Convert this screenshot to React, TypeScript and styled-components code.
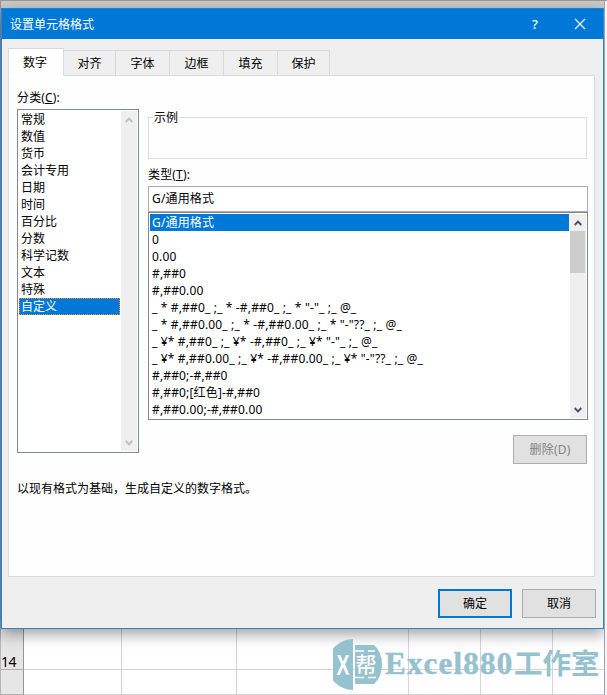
import React from "react";
import styled, { createGlobalStyle } from "styled-components";

const Global = createGlobalStyle`
  * { box-sizing: border-box; }
  html, body { margin: 0; padding: 0; overflow: hidden; }
  body { font: 12px/17px "Noto Sans", "Noto Sans CJK SC", sans-serif; color: #000; }
`;

const Sheet = styled.div`
  position: relative;
  display: flex;
  flex-direction: column;
  width: 607px;
  height: 695px;
  padding-top: 8px;
  overflow: hidden;
  background: linear-gradient(#989898 0 1px, #cbcbcb 1px 8px, #fff 8px);
`;

const Edge = styled.div<{ $right?: boolean }>`
  position: absolute;
  z-index: ${(p) => (p.$right ? 2 : 0)};
  top: 1px;
  bottom: 0;
  left: ${(p) => (p.$right ? "604px" : "0")};
  width: ${(p) => (p.$right ? "3px" : "1px")};
  background: ${(p) =>
    p.$right
      ? "linear-gradient(90deg, #a0a0a0 0 1px, #f5f5f7 1px)"
      : "linear-gradient(#9a9a9a 0 10px, #8b8d93 30px 615px, #b4b5b9 640px)"};
`;

const Dialog = styled.div`
  position: relative;
  z-index: 1;
  display: flex;
  flex-direction: column;
  flex: none;
  width: 603px;
  height: 621px;
  margin-left: 1px;
  border: 1px solid #2a86d2;
  border-top-color: #1580d8;
  background: #efefef;
  box-shadow: 0 5px 14px 0 rgba(0, 0, 0, 0.38);
`;

const TitleBar = styled.div`
  display: flex;
  align-items: center;
  height: 30px;
  flex: none;
  padding: 0 17px 0 8px;
  background: #0078d7;
  color: #fff;
`;

const Title = styled.div`
  flex: 1;
`;

const TitleIcon = styled.div`
  display: flex;
  justify-content: center;
  width: 12px;
  margin-left: 33px;
  font-size: 13px;
  font-weight: 500;
`;

const Tabs = styled.div`
  display: flex;
  align-items: flex-end;
  height: 37px;
  flex: none;
  padding-left: 6px;
  position: relative;
  z-index: 1;
  margin-bottom: -1px;
`;

const Tab = styled.div<{ $w: number; $active?: boolean }>`
  width: ${(p) => p.$w}px;
  height: ${(p) => (p.$active ? 28 : 26)}px;
  padding-top: ${(p) => (p.$active ? 5 : 4)}px;
  padding-right: ${(p) => (p.$active ? 2 : 0)}px;
  text-align: center;
  border: 1px solid #d9d9d9;
  border-left-width: ${(p) => (p.$active ? 1 : 0)}px;
  border-bottom-color: ${(p) => (p.$active ? "#fefefe" : "#d9d9d9")};
  background: ${(p) => (p.$active ? "#fefefe" : "#efefef")};
`;

const Panel = styled.div`
  display: flex;
  flex-direction: column;
  flex: none;
  width: 587px;
  height: 502px;
  margin-left: 6px;
  padding: 13px 6px 0 8px;
  border: 1px solid #d9d9d9;
  background: #fefefe;
`;

const Columns = styled.div`
  display: grid;
  grid-template-columns: 122px 440px;
  column-gap: 9px;
`;

const Column = styled.div<{ $top?: number }>`
  display: flex;
  flex-direction: column;
  padding-top: ${(p) => p.$top ?? 0}px;
`;

const Label = styled.div<{ $h: number; $top?: number }>`
  height: ${(p) => p.$h}px;
  padding-top: ${(p) => p.$top ?? 0}px;
  letter-spacing: 0.15px;
`;

const ListBox = styled.div<{ $h: number }>`
  display: flex;
  height: ${(p) => p.$h}px;
  padding: 1px;
  border: 1px solid #828790;
  background: #fff;
`;

const Items = styled.div<{ $w: number }>`
  width: ${(p) => p.$w}px;
  margin-right: 1px;
`;

const Item = styled.div<{ $selected?: boolean; $focus?: boolean; $spacing?: number }>`
  height: 17px;
  line-height: 17px;
  padding-left: 2px;
  white-space: pre;
  letter-spacing: ${(p) => p.$spacing ?? 0}px;
  color: ${(p) => (p.$selected ? "#fff" : "#000")};
  background: ${(p) => (p.$selected ? "#0078d7" : "transparent")};
  outline: ${(p) => (p.$focus ? "1px dotted #ff8728" : "none")};
  outline-offset: -1px;
`;

const ScrollTrack = styled.div`
  display: flex;
  flex-direction: column;
  align-items: center;
  width: 16px;
  background: #efefef;
`;

const ArrowSlot = styled.div`
  display: flex;
  align-items: center;
  justify-content: center;
  width: 16px;
  height: 17px;
`;

const Thumb = styled.div`
  width: 15px;
  height: 42px;
  align-self: flex-start;
  background: #cdcdcd;
`;

const Spacer = styled.div`
  flex: 1;
`;

const Sample = styled.fieldset`
  width: 439px;
  height: 50px;
  margin: 0;
  padding: 0;
  border: 1px solid #dcdcdc;
`;

const Legend = styled.legend`
  height: 17px;
  margin-left: 4px;
  padding: 0 1px;
`;

const TypeInput = styled.div`
  height: 26px;
  padding: 3px 3px 0;
  border: 1px solid #ababb0;
  background: #fff;
  letter-spacing: 0.15px;
`;

const Button = styled.div<{ $kind?: "primary" | "disabled" }>`
  display: flex;
  align-items: center;
  justify-content: center;
  width: 74px;
  height: 29px;
  background: #e1e1e1;
  border: ${(p) => (p.$kind === "primary" ? "2px solid #0078d7" : "1px solid #adadad")};
  color: ${(p) => (p.$kind === "disabled" ? "#838383" : "#000")};
  letter-spacing: ${(p) => (p.$kind === "disabled" ? 0.2 : 0)}px;
`;

const DeleteRow = styled.div`
  display: flex;
  justify-content: flex-end;
  padding: 15px 1px 0 0;
`;

const Hint = styled.div`
  margin-top: 16px;
`;

const Actions = styled.div`
  display: flex;
  justify-content: flex-end;
  gap: 10px;
  padding: 12px 7px 0 0;
`;

const Grid = styled.div`
  display: grid;
  grid-template-columns: 24px 98px 115px 172px 72px 72px 52px;
  grid-template-rows: 41px 25px;
  flex: none;
`;

const Cell = styled.div<{ $header?: boolean }>`
  display: flex;
  align-items: flex-end;
  border-right: 1px solid ${(p) => (p.$header ? "#969696" : "#d4d4d4")};
  border-bottom: 1px solid ${(p) => (p.$header ? "#b0b0b0" : "#d4d4d4")};
  background: ${(p) => (p.$header ? "#e6e6e6" : "#fff")};
  font-size: 14px;
  line-height: 15px;
  letter-spacing: -0.4px;
  padding-left: 1px;
`;

const Watermark = styled.div`
  position: absolute;
  z-index: 2;
  left: 333px;
  top: 639px;
  display: flex;
  color: #96c1ce;
`;

const Brand = styled.div`
  display: flex;
  margin-left: 2px;
  height: 51px;
  white-space: nowrap;
`;

const BrandLatin = styled.span`
  font: bold 31px/49px "Liberation Serif", serif;
  letter-spacing: 1.2px;
  width: 129px;
  -webkit-text-stroke: 0.5px #96c1ce;
`;

const BrandHan = styled.span`
  font: bold 28.5px/46px "Noto Sans CJK SC", sans-serif;
`;

function Arrow({ down, color }: { down?: boolean; color: string }) {
  return (
    <svg width="8" height="6" viewBox="0 0 8 6">
      <path d={down ? "M0.7 1 L4 4.3 L7.3 1" : "M0.7 5 L4 1.7 L7.3 5"} fill="none" stroke={color} strokeWidth="1.9" />
    </svg>
  );
}

function ScrollBar({ color, thumb }: { color: string; thumb?: boolean }) {
  return (
    <ScrollTrack>
      <ArrowSlot><Arrow color={color} /></ArrowSlot>
      {thumb && <Thumb />}
      <Spacer />
      <ArrowSlot><Arrow down color={color} /></ArrowSlot>
    </ScrollTrack>
  );
}

function Logo() {
  return (
    <svg width="50" height="51" viewBox="0 0 50 51">
      <path d="M20 0 A25.5 25.5 0 0 0 20 51 Z" fill="#96c1ce" />
      <path d="M22 6 H41 Q49 13 49 25.5 Q49 38 41 45 H22 Z" fill="#96c1ce" />
      <path d="M22 12 H31 M35 12 H42 M22 38.5 H31 M35 38.5 H43" stroke="#fff" strokeWidth="1.6" />
      <text x="3.5" y="36" fontFamily="Liberation Sans" fontWeight="bold" fontSize="29" textLength="13" lengthAdjust="spacingAndGlyphs" fill="#fff">X</text>
      <text x="22.5" y="33" fontFamily="Noto Sans CJK SC" fontWeight="500" fontSize="21" fill="#fff">帮</text>
    </svg>
  );
}

const tabs: [string, number][] = [["数字", 56], ["对齐", 52], ["字体", 54], ["边框", 54], ["填充", 54], ["保护", 52]];
const categories = ["常规", "数值", "货币", "会计专用", "日期", "时间", "百分比", "分数", "科学记数", "文本", "特殊", "自定义"];
const formats = [
  "G/通用格式",
  "0",
  "0.00",
  "#,##0",
  "#,##0.00",
  '_ * #,##0_ ;_ * -#,##0_ ;_ * "-"_ ;_ @_ ',
  '_ * #,##0.00_ ;_ * -#,##0.00_ ;_ * "-"??_ ;_ @_ ',
  '_ ¥* #,##0_ ;_ ¥* -#,##0_ ;_ ¥* "-"_ ;_ @_ ',
  '_ ¥* #,##0.00_ ;_ ¥* -#,##0.00_ ;_ ¥* "-"??_ ;_ @_ ',
  "#,##0;-#,##0",
  "#,##0;[红色]-#,##0",
  "#,##0.00;-#,##0.00",
];

export default function App() {
  return (
    <>
      <Global />
      <Sheet>
        <Edge />
        <Edge $right />
        <Dialog>
          <TitleBar>
            <Title>设置单元格格式</Title>
            <TitleIcon>?</TitleIcon>
            <TitleIcon>
              <svg width="12" height="12" viewBox="0 0 12 12">
                <path d="M1 1 L11 11 M11 1 L1 11" stroke="#fff" strokeWidth="1.1" />
              </svg>
            </TitleIcon>
          </TitleBar>
          <Tabs>
            {tabs.map(([name, w], i) => (
              <Tab key={name} $w={w} $active={i === 0}>{name}</Tab>
            ))}
          </Tabs>
          <Panel>
            <Columns>
              <Column>
                <Label $h={20}>分类(<u>C</u>):</Label>
                <ListBox $h={344}>
                  <Items $w={101}>
                    {categories.map((c) => (
                      <Item key={c} $selected={c === "自定义"} $focus={c === "自定义"}>{c}</Item>
                    ))}
                  </Items>
                  <ScrollBar color="#bfbfbf" />
                </ListBox>
              </Column>
              <Column $top={20}>
                <Sample><Legend>示例</Legend></Sample>
                <Label $h={27} $top={7}>类型(<u>T</u>):</Label>
                <TypeInput>G/通用格式</TypeInput>
                <ListBox $h={208}>
                  <Items $w={419}>
                    {formats.map((f, i) => (
                      <Item key={f} $selected={i === 0} $spacing={0.155}>{f}</Item>
                    ))}
                  </Items>
                  <ScrollBar color="#554477" thumb />
                </ListBox>
                <DeleteRow><Button $kind="disabled">删除(D)</Button></DeleteRow>
              </Column>
            </Columns>
            <Hint>以现有格式为基础，生成自定义的数字格式。</Hint>
          </Panel>
          <Actions>
            <Button $kind="primary">确定</Button>
            <Button>取消</Button>
          </Actions>
        </Dialog>
        <Grid>
          {["14", ""].flatMap((label, row) =>
            Array.from({ length: 7 }, (_, col) => (
              <Cell key={`${row}-${col}`} $header={col === 0}>{col === 0 ? label : ""}</Cell>
            ))
          )}
        </Grid>
        <Watermark>
          <Logo />
          <Brand><BrandLatin>Excel880</BrandLatin><BrandHan>工作室</BrandHan></Brand>
        </Watermark>
      </Sheet>
    </>
  );
}
